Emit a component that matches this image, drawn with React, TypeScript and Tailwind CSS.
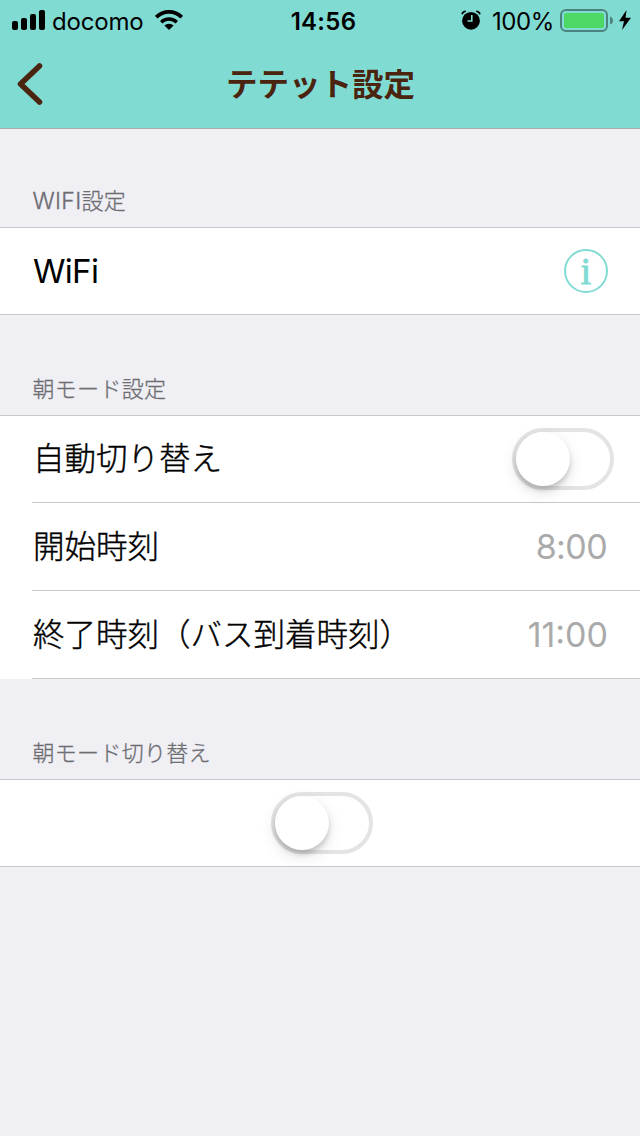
import React from "react";

const StatusBar = () => {
  return (
    <div className="grid h-10 grid-cols-[1fr_auto_1fr] items-center text-black">
      <div className="flex items-center pl-3">
        <svg width="33" height="20" viewBox="0 0 33 20">
          <rect x="0" y="11" width="6" height="9" rx="2" />
          <rect x="9" y="8" width="6" height="12" rx="2" />
          <rect x="18" y="4" width="6" height="16" rx="2" />
          <rect x="27" y="0" width="6" height="20" rx="2" />
        </svg>
        <span className="ml-[7px] w-[91px] pt-[3px] text-[24px] leading-[37px] tracking-[-0.2px]">docomo</span>
        <svg className="ml-3" width="28" height="20" viewBox="0 0 28 20">
          <path d="M14 20 L9.4 15.6 A6.6 6.6 0 0 1 18.6 15.6 Z" />
          <path d="M6.2 12.2 A11.2 11.2 0 0 1 21.8 12.2" fill="none" stroke="black" strokeWidth="3.4" />
          <path d="M1.3 7.2 A18 18 0 0 1 26.7 7.2" fill="none" stroke="black" strokeWidth="3.8" />
        </svg>
      </div>
      <div className="pl-[7px] pt-[3px] text-[24px] font-semibold leading-[37px] tracking-[0.3px]">14:56</div>
      <div className="flex items-center justify-end pr-[9px]">
        <svg width="20" height="20" viewBox="0 0 20 20">
          <circle cx="10" cy="10.8" r="8.9" />
          <path d="M1 4.2 Q1.8 1.5 4.8 1.3 M19 4.2 Q18.2 1.5 15.2 1.3" fill="none" stroke="black" strokeWidth="1.6" />
          <path d="M10.8 5 V11 H6.5" fill="none" stroke="#80dbd3" strokeWidth="1.6" />
        </svg>
        <span className="ml-[11px] w-[62px] pt-[3px] text-[24px] leading-[37px] tracking-[-0.4px]">100%</span>
        <svg className="ml-1.5 mt-px" width="53" height="23" viewBox="0 0 53 23">
          <rect x="1" y="1" width="46" height="21" rx="5" fill="none" stroke="#4d837f" strokeWidth="2" />
          <rect x="4" y="4" width="40" height="15" rx="2" fill="#4cd964" />
          <path d="M50 7.5 Q53 8.5 53 11.5 Q53 14.5 50 15.5 Z" fill="#4d837f" />
        </svg>
        <svg className="ml-1.5" width="12" height="20" viewBox="0 0 12 20">
          <path d="M7.5 0 L0 11.2 H5 L3 20 L12 7.8 H6.6 Z" />
        </svg>
      </div>
    </div>
  );
};

const NavBar = () => {
  return (
    <div className="grid h-[88px] grid-cols-[64px_1fr_64px] items-center">
      <button className="pl-[17px]">
        <svg width="26" height="42" viewBox="0 0 26 42">
          <path
            d="M22.5 3 L3.5 21 L22.5 39"
            fill="none"
            stroke="#4a240e"
            strokeWidth="5.5"
            strokeLinecap="round"
            strokeLinejoin="round"
          />
        </svg>
      </button>
      <h1 className="pl-px pt-0.5 text-center text-[31.5px] font-bold leading-[86px] text-[#4a240e]">テテット設定</h1>
    </div>
  );
};

const SectionTitle = ({ children }: { children: React.ReactNode }) => (
  <h2 className="pb-[11px] pl-[32.5px] text-[22px] font-light leading-[30px] tracking-[0.3px] text-[#6d6d72] [-webkit-text-stroke:0.3px_#6d6d72]">
    {children}
  </h2>
);

const Toggle = () => (
  <button className="flex h-[62px] w-[102px] items-center rounded-full border-4 border-[#e4e4e4] bg-white">
    <span className="size-[54px] rounded-full bg-white shadow-[0_6px_16px_rgba(0,0,0,0.12),0_4px_5px_rgba(0,0,0,0.16)]" />
  </button>
);

const Label = ({ children }: { children: React.ReactNode }) => (
  <span className="text-[31.5px] font-light text-black [-webkit-text-stroke:0.4px_black]">{children}</span>
);

const Row = ({ label, children }: { label: string; children: React.ReactNode }) => (
  <div className="ml-8 flex h-[88px] items-center justify-between border-b border-[#c8c7cc] pl-px">
    <Label>{label}</Label>
    {children}
  </div>
);

const App = () => {
  return (
    <div className="h-[1136px] w-[640px] overflow-hidden whitespace-nowrap bg-[#efeff4] font-[Inter,'Noto_Sans_CJK_JP',sans-serif]">
      <header className="h-[129px] border-b border-[#a9a9ac] bg-[#80dbd3]">
        <StatusBar />
        <NavBar />
      </header>

      <section>
        <div className="flex h-[98px] flex-col justify-end">
          <SectionTitle>
            <span className="text-[23px]">WIFI</span>設定
          </SectionTitle>
        </div>
        <div className="flex h-[88px] items-center justify-between border-y border-[#c8c7cc] bg-white pl-[33px] pr-8">
          <span className="pt-0.5 text-[33px] tracking-[-0.7px] text-black">WiFi</span>
          <span className="flex size-11 items-center justify-center rounded-full border-2 border-[#80dbd3] font-['Liberation_Serif',serif] text-[37px] leading-none text-[#80dbd3] [-webkit-text-stroke:1px_#80dbd3]">
            i
          </span>
        </div>
      </section>

      <section>
        <div className="flex h-[100px] flex-col justify-end">
          <SectionTitle>朝モード設定</SectionTitle>
        </div>
        <div className="h-[264px] border-t border-[#c8c7cc] bg-white">
          <div className="ml-8 flex h-[87px] items-center justify-between border-b border-[#c8c7cc] pl-px pr-[26px]">
            <Label>自動切り替え</Label>
            <Toggle />
          </div>
          <Row label="開始時刻">
            <span className="pr-[33px] text-[34px] tracking-[-0.6px] text-[#aaaaaa]">8:00</span>
          </Row>
          <Row label="終了時刻（バス到着時刻）">
            <span className="pr-8 text-[34px] text-[#aaaaaa]">11:00</span>
          </Row>
        </div>
      </section>

      <section>
        <div className="flex h-[100px] flex-col justify-end">
          <SectionTitle>朝モード切り替え</SectionTitle>
        </div>
        <div className="flex h-[88px] items-center justify-center border-y border-[#c8c7cc] bg-white pl-1">
          <Toggle />
        </div>
      </section>
    </div>
  );
};

export default App;
